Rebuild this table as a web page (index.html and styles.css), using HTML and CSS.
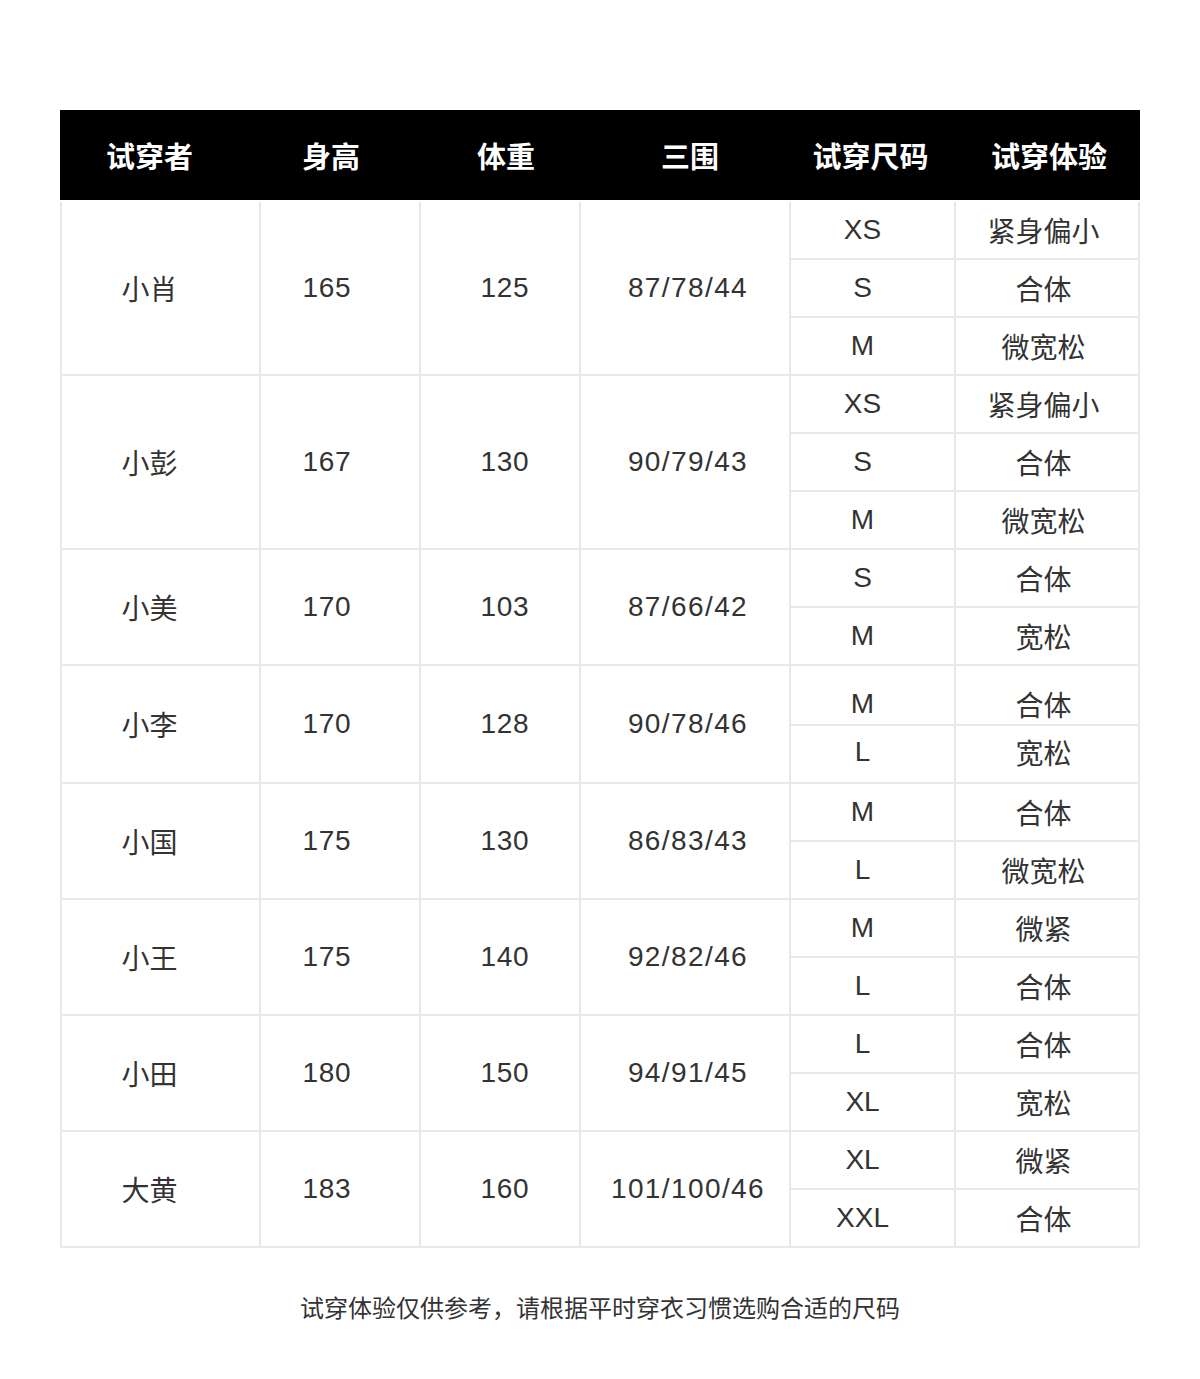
FILE: index.html
```html
<!DOCTYPE html>
<html lang="zh-CN">
<head>
<meta charset="utf-8">
<title>试穿体验</title>
<link rel="stylesheet" href="styles.css">
</head>
<body>
<main class="page">
  <table class="fit-table">
    <colgroup>
      <col class="w1"><col class="w2"><col class="w3"><col class="w4"><col class="w5"><col class="w6">
    </colgroup>
    <thead>
      <tr>
        <th class="h1">试穿者</th>
        <th class="h2">身高</th>
        <th class="h3">体重</th>
        <th class="h4">三围</th>
        <th class="h5">试穿尺码</th>
        <th class="h6">试穿体验</th>
      </tr>
    </thead>
    <tbody>
      <tr>
        <td class="c1 first" rowspan="3">小肖</td>
        <td class="c2" rowspan="3">165</td>
        <td class="c3" rowspan="3">125</td>
        <td class="c4" rowspan="3">87/78/44</td>
        <td class="c5">XS</td><td class="c6">紧身偏小</td>
      </tr>
      <tr><td class="c5">S</td><td class="c6">合体</td></tr>
      <tr><td class="c5">M</td><td class="c6">微宽松</td></tr>

      <tr>
        <td class="c1 first" rowspan="3">小彭</td>
        <td class="c2" rowspan="3">167</td>
        <td class="c3" rowspan="3">130</td>
        <td class="c4" rowspan="3">90/79/43</td>
        <td class="c5">XS</td><td class="c6">紧身偏小</td>
      </tr>
      <tr><td class="c5">S</td><td class="c6">合体</td></tr>
      <tr><td class="c5">M</td><td class="c6">微宽松</td></tr>

      <tr>
        <td class="c1 first" rowspan="2">小美</td>
        <td class="c2" rowspan="2">170</td>
        <td class="c3" rowspan="2">103</td>
        <td class="c4" rowspan="2">87/66/42</td>
        <td class="c5">S</td><td class="c6">合体</td>
      </tr>
      <tr><td class="c5">M</td><td class="c6">宽松</td></tr>

      <tr>
        <td class="c1 first" rowspan="2">小李</td>
        <td class="c2" rowspan="2">170</td>
        <td class="c3" rowspan="2">128</td>
        <td class="c4" rowspan="2">90/78/46</td>
        <td class="c5 low">M</td><td class="c6 low">合体</td>
      </tr>
      <tr><td class="c5 high">L</td><td class="c6 high">宽松</td></tr>

      <tr>
        <td class="c1 first" rowspan="2">小国</td>
        <td class="c2" rowspan="2">175</td>
        <td class="c3" rowspan="2">130</td>
        <td class="c4" rowspan="2">86/83/43</td>
        <td class="c5">M</td><td class="c6">合体</td>
      </tr>
      <tr><td class="c5">L</td><td class="c6">微宽松</td></tr>

      <tr>
        <td class="c1 first" rowspan="2">小王</td>
        <td class="c2" rowspan="2">175</td>
        <td class="c3" rowspan="2">140</td>
        <td class="c4" rowspan="2">92/82/46</td>
        <td class="c5">M</td><td class="c6">微紧</td>
      </tr>
      <tr><td class="c5">L</td><td class="c6">合体</td></tr>

      <tr>
        <td class="c1 first" rowspan="2">小田</td>
        <td class="c2" rowspan="2">180</td>
        <td class="c3" rowspan="2">150</td>
        <td class="c4" rowspan="2">94/91/45</td>
        <td class="c5">L</td><td class="c6">合体</td>
      </tr>
      <tr><td class="c5">XL</td><td class="c6">宽松</td></tr>

      <tr>
        <td class="c1 first" rowspan="2">大黄</td>
        <td class="c2" rowspan="2">183</td>
        <td class="c3" rowspan="2">160</td>
        <td class="c4" rowspan="2">101/100/46</td>
        <td class="c5">XL</td><td class="c6">微紧</td>
      </tr>
      <tr><td class="c5">XXL</td><td class="c6">合体</td></tr>
    </tbody>
  </table>
  <p class="note">试穿体验仅供参考，请根据平时穿衣习惯选购合适的尺码</p>
</main>
</body>
</html>
```

FILE: styles.css
```css
html, body {
  margin: 0;
  padding: 0;
  background: #ffffff;
}

body {
  font-family: "Liberation Sans", "Noto Sans CJK SC", sans-serif;
  color: #333333;
}

.page {
  padding: 110px 60px 0;
}

.fit-table {
  width: 1080px;
  border-collapse: separate;
  border-spacing: 0;
  table-layout: fixed;
}

.w1 { width: 201px; }
.w2 { width: 160px; }
.w3 { width: 160px; }
.w4 { width: 210px; }
.w5 { width: 165px; }
.w6 { width: 184px; }

.fit-table th {
  background: #000000;
  color: #ffffff;
  font-size: 29px;
  font-weight: bold;
  height: 90px;
  padding: 0;
  text-align: center;
  border-bottom: 2px solid #ffffff;
}

.h1 { padding-right: 22px !important; }
.h2 { padding-right: 20px !important; }
.h3 { padding-left: 10px !important; }
.h4 { padding-left: 8px !important; }
.h5 { padding-right: 6px !important; }
.h6 { padding-left: 2px !important; }

.fit-table td {
  font-size: 28px;
  height: 56px;
  padding: 0;
  text-align: center;
  vertical-align: middle;
  border-right: 2px solid #e8e8e8;
  border-bottom: 2px solid #e8e8e8;
  color: #333333;
}

.fit-table td.first {
  border-left: 2px solid #e8e8e8;
}

.c1 { padding-right: 22px !important; }
.c2 { padding-right: 26px !important; letter-spacing: 0.7px; }
.c3 { padding-left: 10px !important; letter-spacing: 0.7px; }
.c4 { padding-left: 6px !important; letter-spacing: 1.4px; }
.c5 { padding-right: 20px !important; }
.c6 { padding-right: 7px !important; }

.fit-table td.low {
  padding-top: 18px;
  height: 38px;
}

.fit-table td.high {
  padding-bottom: 4px;
  height: 52px;
}

.note {
  margin: 46px 0 0;
  text-align: center;
  font-size: 24px;
  color: #333333;
  line-height: 30px;
}
```
